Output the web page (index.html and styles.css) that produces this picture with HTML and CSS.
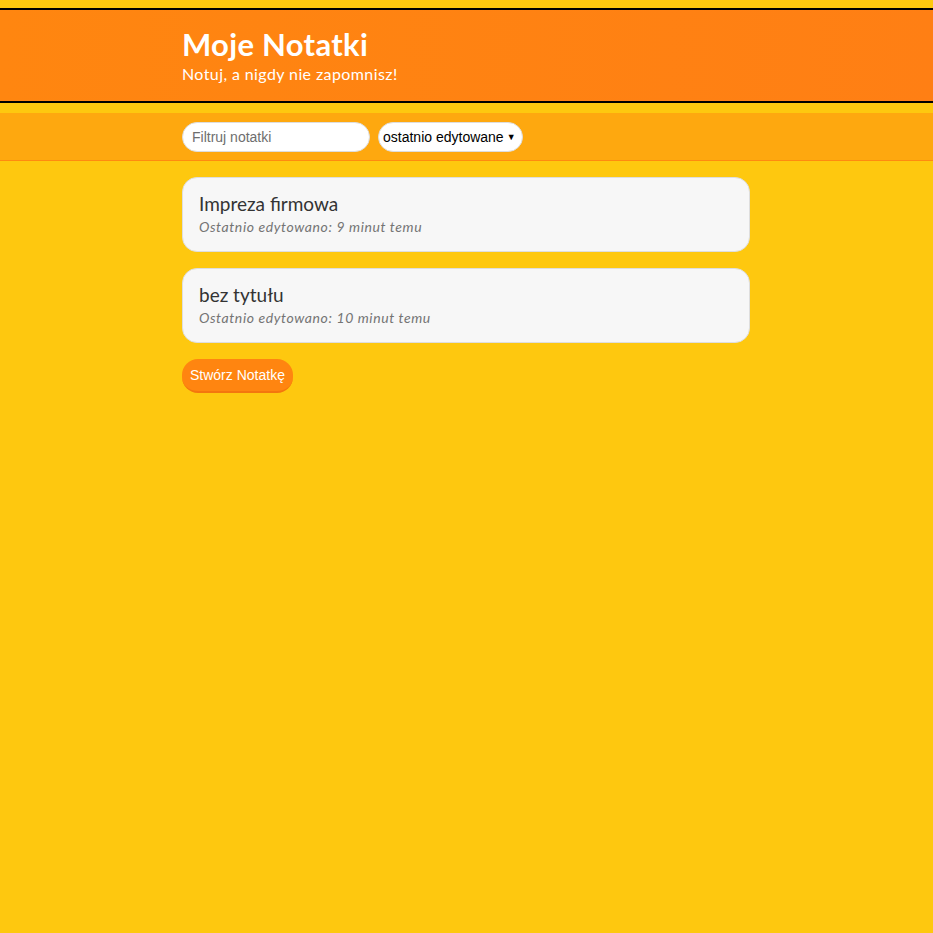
FILE: index.html
```html
<!DOCTYPE html>
<html lang="pl">
<head>
<meta charset="utf-8">
<title>Moje Notatki</title>
<link rel="stylesheet" href="styles.css">
</head>
<body>
<header class="header">
  <div class="container">
    <h1 class="header__title">Moje Notatki</h1>
    <h2 class="header__subtitle">Notuj, a nigdy nie zapomnisz!</h2>
  </div>
</header>
<div class="actions">
  <div class="container actions__row">
    <input class="input" type="text" placeholder="Filtruj notatki">
    <div class="select">ostatnio edytowane <span class="select__arrow">▼</span></div>
  </div>
</div>
<main class="container notes">
  <a class="note">
    <p class="note__title">Impreza firmowa</p>
    <p class="note__meta">Ostatnio edytowano: 9 minut temu</p>
  </a>
  <a class="note">
    <p class="note__title">bez tytułu</p>
    <p class="note__meta">Ostatnio edytowano: 10 minut temu</p>
  </a>
  <div><button class="button">Stwórz Notatkę</button></div>
</main>
</body>
</html>
```

FILE: styles.css
```css
* { box-sizing: border-box; }
html, body { margin: 0; padding: 0; }
body {
  background: #fec80f;
  font-family: "Lato", "Open Sans", sans-serif;
  min-height: 933px;
}
.container {
  width: 568px;
  margin-left: 182px;
}
.header {
  margin-top: 8px;
  background: linear-gradient(90deg, #ff8610, #ff7f14);
  border-top: 2px solid #000;
  border-bottom: 2px solid #000;
  height: 95px;
  padding-top: 16px;
  color: #fff;
}
.header__title {
  margin: 0;
  font-size: 31px;
  font-weight: 700;
  line-height: 36px;
  letter-spacing: 0.3px;
}
.header__subtitle {
  margin: 0;
  font-size: 16px;
  font-weight: 400;
  line-height: 24px;
  letter-spacing: 0.4px;
}
.actions {
  margin-top: 10px;
  background: #fea80f;
  border-bottom: 1px solid #ff8a10;
  height: 48px;
}
.actions__row {
  display: flex;
  align-items: center;
  gap: 8px;
  height: 47px;
}
.input {
  width: 188px;
  height: 30px;
  border: 1px solid #ddd;
  border-radius: 15px;
  padding: 0 9px;
  font-family: "Liberation Sans", Arial, sans-serif;
  font-size: 14px;
  background: #fff;
  outline: none;
}
.input::placeholder { color: #6e6e6e; }
.select {
  height: 30px;
  border: 1px solid #ddd;
  border-radius: 15px;
  background: #fff;
  padding: 0 6px 0 4px;
  display: flex;
  align-items: center;
  gap: 3px;
  font-family: "Liberation Sans", Arial, sans-serif;
  font-size: 14px;
  color: #000;
}
.select__arrow { font-size: 9px; }
.notes {
  padding-top: 16px;
  display: flex;
  flex-direction: column;
  gap: 16px;
}
.note {
  display: block;
  background: #f7f7f7;
  border: 1px solid #dedede;
  border-radius: 15px;
  height: 75px;
  padding: 14px 16px;
}
.note__title {
  margin: 0;
  font-size: 19px;
  font-weight: 400;
  line-height: 24px;
  color: #333;
}
.note__meta {
  margin: 0;
  font-size: 14px;
  font-style: italic;
  font-weight: 400;
  line-height: 21px;
  letter-spacing: 0.6px;
  color: #747474;
}
.button {
  background: #ff8510;
  border: none;
  border-bottom: 2px solid #f4760e;
  border-radius: 16px;
  color: #fff;
  font-family: "Liberation Sans", Arial, sans-serif;
  font-size: 14px;
  height: 34px;
  padding: 0 8px;
}
```
